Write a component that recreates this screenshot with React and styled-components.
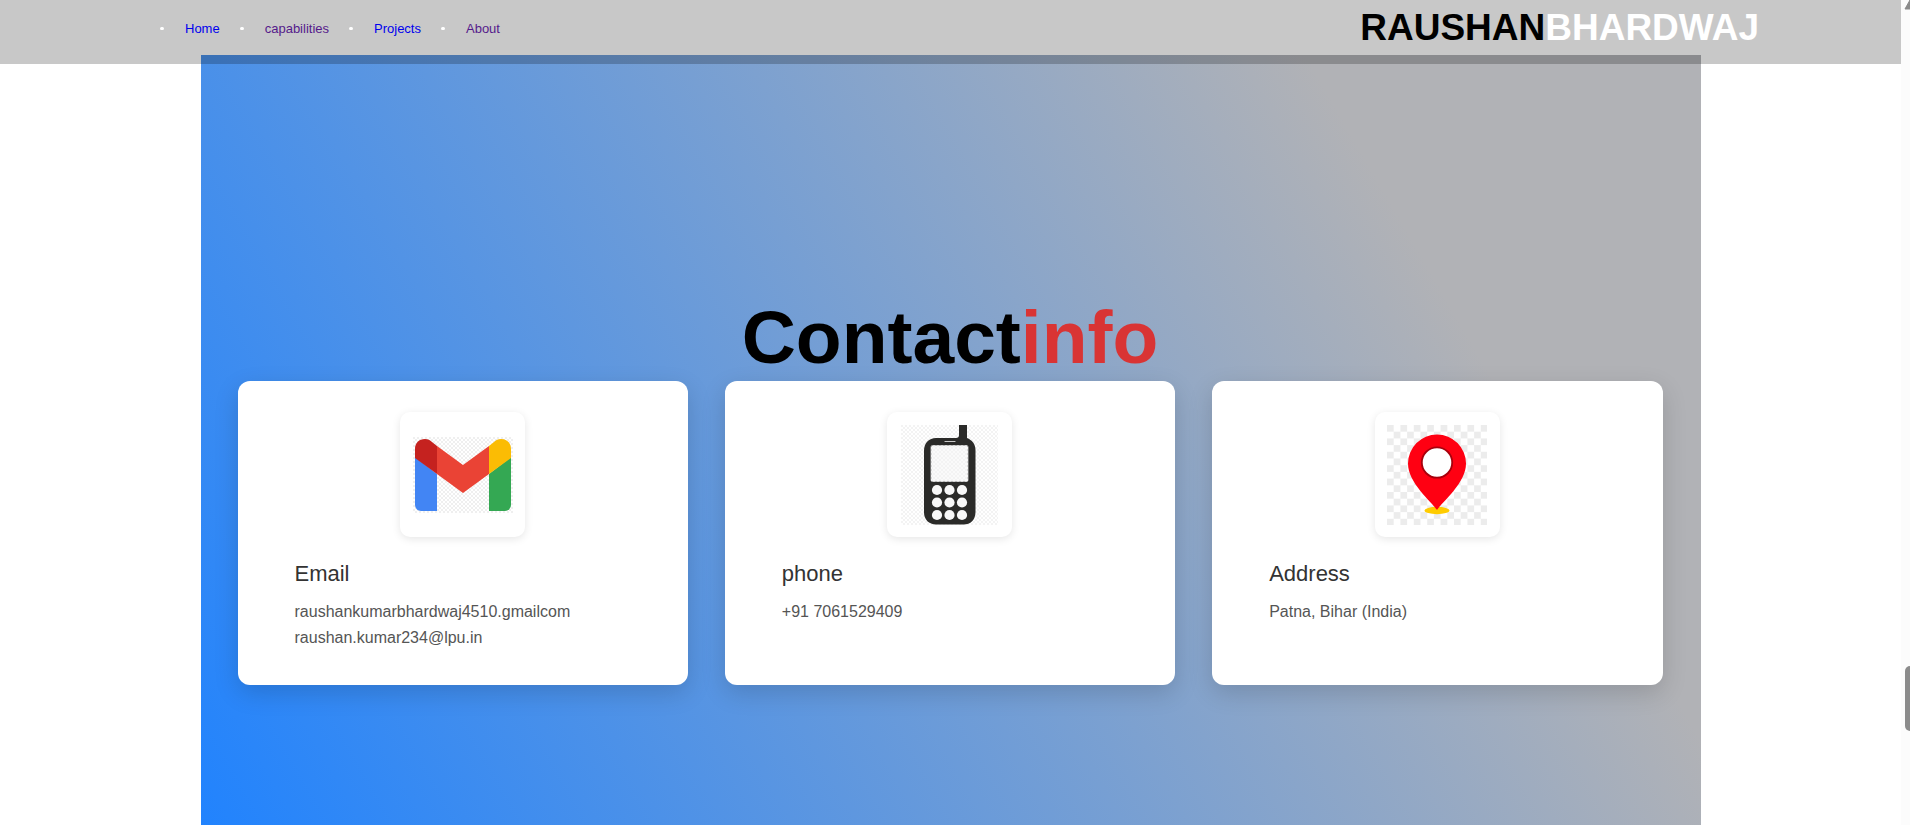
import React from "react";
import styled, { createGlobalStyle } from "styled-components";

const GlobalStyle = createGlobalStyle`
  * { box-sizing: border-box; margin: 0; padding: 0; }
  body {
    background: #fff;
    font-family: Arial, "Liberation Sans", sans-serif;
  }
`;

const Page = styled.div`
  display: flex;
  height: 100vh;
  overflow: hidden;
  background: #fff;
`;

const Content = styled.div`
  flex: 1;
  min-width: 0;
`;

const Header = styled.header`
  position: relative;
  z-index: 1;
  display: flex;
  justify-content: space-between;
  align-items: flex-start;
  height: 64px;
  padding: 0 142px 0 160px;
  background: rgba(0, 0, 0, 0.216);
`;

const NavList = styled.ul`
  display: flex;
  gap: 20px;
  padding-top: 21px;
  list-style: none;
  font-size: 13px;
  line-height: 15px;
`;

const NavItem = styled.li`
  display: flex;
  align-items: center;
  gap: 21px;

  &::before {
    content: "";
    width: 4px;
    height: 3px;
    border-radius: 2px;
    background: #fff;
  }
`;

const NavLink = styled.a`
  color: ${(p) => (p.$visited ? "#551a8b" : "#0000ee")};
  text-decoration: none;
`;

const Brand = styled.h1`
  padding-top: 5px;
  color: #000;
  font-size: 37px;
  line-height: 46px;

  span { color: #fff; }
`;

const Section = styled.section`
  width: 100%;
  max-width: 1500px;
  min-height: 100vh;
  margin: -9px auto 0;
  padding: 239px 38px 140px 37px;
  background: linear-gradient(60deg, #1e82ff 0%, #b1b2b6 80%);
`;

const Title = styled.h2`
  color: #000;
  font-size: 75px;
  line-height: 87px;
  text-align: center;

  span { color: #d93434; }
`;

const Cards = styled.div`
  display: grid;
  grid-template-columns: repeat(3, 1fr);
  gap: 37px;
`;

const Card = styled.article`
  display: flex;
  flex-direction: column;
  min-height: 304px;
  padding: 31px 57px;
  border-radius: 12px;
  background: #fff;
  box-shadow: 0 8px 24px rgba(0, 0, 0, 0.15);
`;

const IconTile = styled.div`
  display: flex;
  align-self: center;
  align-items: center;
  justify-content: center;
  width: 125px;
  height: 125px;
  margin-bottom: 23px;
  border-radius: 10px;
  background: #fff;
  box-shadow: 0 2px 8px rgba(0, 0, 0, 0.1);
`;

const CardTitle = styled.h3`
  margin-bottom: 11px;
  color: #333;
  font-size: 22px;
  font-weight: 400;
  line-height: 28px;
`;

const CardText = styled.p`
  color: #555;
  font-size: 16px;
  line-height: 26px;
`;

const ScrollTrack = styled.div`
  position: relative;
  flex: none;
  width: 9px;
  background: #fcfcfc;
  overflow: hidden;
`;

const ScrollArrow = styled.svg`
  position: absolute;
  top: 0;
  left: 2px;
`;

const ScrollThumb = styled.div`
  position: absolute;
  top: 666px;
  left: 4px;
  width: 10px;
  height: 65px;
  border-radius: 5px;
  background: #8b8b8b;
`;

function MailIcon() {
  return (
    <svg width="100" height="76" viewBox="0 0 100 76" aria-hidden="true">
      <defs>
        <pattern id="mailGrid" width="4" height="4" patternUnits="userSpaceOnUse">
          <path d="M0 0h2v2H0zM2 2h2v2H2z" fill="#efefef" />
        </pattern>
      </defs>
      <rect width="100" height="76" fill="url(#mailGrid)" />
      <path d="M2 20 24 37V74H8a6 6 0 0 1-6-6z" fill="#4285f4" />
      <path d="M98 20 76 37V74H92a6 6 0 0 0 6-6z" fill="#34a853" />
      <path d="M24 9 50 28 76 9V37L50 56 24 37z" fill="#ea4335" />
      <path d="M2 21V12C2 6 6 2 12 2c3 0 5 1 7 3l5 4V37z" fill="#c5221f" />
      <path d="M98 21V12C98 6 94 2 88 2c-3 0-5 1-7 3l-5 4V37z" fill="#fbbc04" />
    </svg>
  );
}

function PhoneIcon() {
  return (
    <svg width="97" height="100" viewBox="0 0 97 100" aria-hidden="true">
      <defs>
        <pattern id="phoneGrid" width="4" height="4" patternUnits="userSpaceOnUse">
          <path d="M0 0h2v2H0zM2 2h2v2H2z" fill="#f3f3f3" />
        </pattern>
      </defs>
      <rect width="97" height="100" fill="url(#phoneGrid)" />
      <path
        d="M58 0h8v13c5 2 8.500 6 8.500 12v62c0 8-5 12.500-12 12.500H35c-7 0-12-5-12-12V26c0-8 5-13 12-13h20c2 0 3-1 3-3z"
        fill="#2b2b29"
      />
      <rect x="30" y="20.500" width="37" height="36" rx="1.500" fill="#fafafa" stroke="#b5b5b5" />
      <rect x="30" y="20.500" width="37" height="36" fill="url(#phoneGrid)" />
      <path d="M44 16.500h10" stroke="#c9c9c9" strokeWidth="1.200" strokeLinecap="round" />
      {[65, 77.5, 90].map((y) =>
        [36, 48.5, 61].map((x) => (
          <circle key={`${x}-${y}`} cx={x} cy={y} r="5.100" fill="#f8f8f8" />
        ))
      )}
    </svg>
  );
}

function PinIcon() {
  return (
    <svg width="100" height="100" viewBox="0 0 100 100" aria-hidden="true">
      <defs>
        <pattern id="pinGrid" width="13.4" height="13.4" patternUnits="userSpaceOnUse">
          <path d="M0 0h6.700v6.700H0zM6.700 6.700h6.700v6.700H6.700z" fill="#ececec" />
        </pattern>
      </defs>
      <rect width="100" height="100" fill="url(#pinGrid)" />
      <ellipse cx="50" cy="85.500" rx="12.500" ry="3.700" fill="#fc0" />
      <path d="M50 85C44 76 21 58 21 38.500a29 29 0 0 1 58 0C79 58 56 76 50 85z" fill="#ff0012" />
      <circle cx="50" cy="37.500" r="15.200" fill="#fff" stroke="#a8000c" strokeWidth="1.800" />
    </svg>
  );
}

const links = [
  { label: "Home" },
  { label: "capabilities", visited: true },
  { label: "Projects" },
  { label: "About", visited: true },
];

const contacts = [
  {
    title: "Email",
    Icon: MailIcon,
    lines: ["raushankumarbhardwaj4510.gmailcom", "raushan.kumar234@lpu.in"],
  },
  { title: "phone", Icon: PhoneIcon, lines: ["+91 7061529409"] },
  { title: "Address", Icon: PinIcon, lines: ["Patna, Bihar (India)"] },
];

export default function App() {
  return (
    <Page>
      <GlobalStyle />
      <Content>
        <Header>
          <nav>
            <NavList>
              {links.map((link) => (
                <NavItem key={link.label}>
                  <NavLink href="#" $visited={link.visited}>{link.label}</NavLink>
                </NavItem>
              ))}
            </NavList>
          </nav>
          <Brand>RAUSHAN<span>BHARDWAJ</span></Brand>
        </Header>
        <Section>
          <Title>Contact<span>info</span></Title>
          <Cards>
            {contacts.map(({ title, Icon, lines }) => (
              <Card key={title}>
                <IconTile><Icon /></IconTile>
                <CardTitle>{title}</CardTitle>
                {lines.map((line) => <CardText key={line}>{line}</CardText>)}
              </Card>
            ))}
          </Cards>
        </Section>
      </Content>
      <ScrollTrack aria-hidden="true">
        <ScrollArrow width="14" height="10" viewBox="0 0 14 10">
          <path d="M2 9 7 0l5 9z" fill="#8b8b8b" stroke="#8b8b8b" strokeLinejoin="round" />
        </ScrollArrow>
        <ScrollThumb />
      </ScrollTrack>
    </Page>
  );
}
